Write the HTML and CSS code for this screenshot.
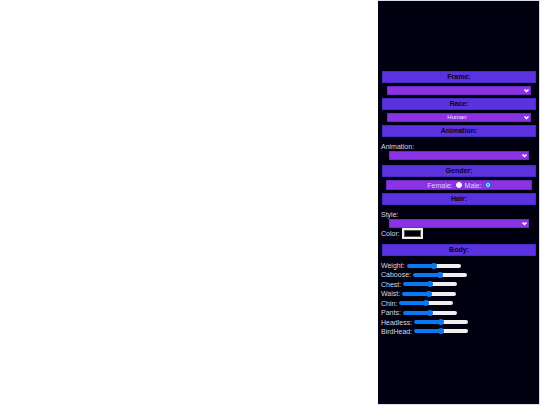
FILE: index.html
```
<!DOCTYPE html>
<html lang="en">
<head>
    <meta charset="UTF-8">
    <meta name="viewport" content="width=device-width, initial-scale=1.0">
    <title>Character Editor</title>
    <link rel="stylesheet" href="styles.css">
</head>
<body>

    <main class="scene"></main>

    <!-- Character Settings -->
    <form class="panel">
        <h2 class="bar">Frame:</h2>
        <select class="dropdown" aria-label="Frame">
            <option></option>
        </select>

        <h2 class="bar">Race:</h2>
        <select class="dropdown" aria-label="Race">
            <option>Human</option>
        </select>

        <h2 class="bar">Animation:</h2>
        <div class="field">
            <label for="animation">Animation:</label>
            <select class="dropdown small" id="animation">
                <option></option>
            </select>
        </div>

        <h2 class="bar">Gender:</h2>
        <div class="gender">
            <label for="female">Female:</label>
            <input type="radio" id="female" name="gender">
            <label for="male">Male:</label>
            <input type="radio" id="male" name="gender" checked>
        </div>

        <h2 class="bar">Hair:</h2>
        <div class="field">
            <label for="style">Style:</label>
            <select class="dropdown small" id="style">
                <option></option>
            </select>
            <div class="color-row">
                <label for="color">Color:</label>
                <input type="color" id="color" value="#000000">
            </div>
        </div>

        <h2 class="bar">Body:</h2>
        <div class="sliders">
            <div class="slider"><label for="weight">Weight:</label><input type="range" id="weight"></div>
            <div class="slider"><label for="caboose">Caboose:</label><input type="range" id="caboose"></div>
            <div class="slider"><label for="chest">Chest:</label><input type="range" id="chest"></div>
            <div class="slider"><label for="waist">Waist:</label><input type="range" id="waist"></div>
            <div class="slider"><label for="chin">Chin:</label><input type="range" id="chin"></div>
            <div class="slider"><label for="pants">Pants:</label><input type="range" id="pants"></div>
            <div class="slider"><label for="headless">Headless:</label><input type="range" id="headless"></div>
            <div class="slider"><label for="birdhead">BirdHead:</label><input type="range" id="birdhead"></div>
        </div>
    </form>

</body>
</html>
```
FILE: styles.css
```
* {
    box-sizing: border-box;
}

body {
    margin: 0;
    min-height: 100vh;
    display: flex;
    background-color: #fff;
    font-family: "Liberation Sans", Arial, sans-serif;
    font-size: 7px;
    line-height: 9px;
}

.scene {
    flex: 1;
}

/* Side Panel */
.panel {
    width: 30%;
    display: flex;
    flex-direction: column;
    gap: 3px;
    padding: 70px 3px 16px 4px;
    border: 1px solid #dcdce4;
    border-left: none;
    background-color: #000010;
    color: #d8d8e2;
}

.bar {
    margin: 0;
    border: 1px solid #4a2bc4;
    background-color: #5a32e0;
    color: #05021c;
    font-size: 7px;
    line-height: 10px;
    text-align: center;
}

/* Dropdowns */
.dropdown {
    appearance: none;
    display: block;
    height: 9px;
    margin: 0 5px;
    padding: 0 8px 0 4px;
    border: 1px solid #6f2bbd;
    border-radius: 0;
    background: #8a33e4 url("data:image/svg+xml,%3Csvg xmlns='http://www.w3.org/2000/svg' viewBox='0 0 10 8'%3E%3Cpath d='M1 1l4 4 4-4' fill='none' stroke='white' stroke-width='3'/%3E%3C/svg%3E") no-repeat right 1px center / 5px 4px;
    color: #f0e4fc;
    font-family: inherit;
    font-size: 6px;
    line-height: 7px;
    text-align: center;
    text-align-last: center;
}

.field {
    margin: 2px 0 2px -1px;
}

.field label {
    display: block;
}

.dropdown.small {
    width: calc(100% - 15px);
    margin: 0 8px;
}

/* Gender */
.gender {
    display: flex;
    justify-content: center;
    align-items: center;
    gap: 3px;
    height: 10px;
    margin: 0 4px;
    border: 1px solid #6f2bbd;
    background-color: #8a33e4;
}

.gender input {
    appearance: none;
    width: 6px;
    height: 6px;
    margin: 0;
    border: 1px solid #fff;
    border-radius: 50%;
    background-color: #fff;
}

.gender input:checked {
    border-color: #0a78f0;
    background-color: #0a78f0;
    box-shadow: inset 0 0 0 1px #fff;
}

/* Hair Color */
.color-row {
    display: flex;
    align-items: center;
    gap: 2px;
}

.color-row input {
    appearance: none;
    width: 21px;
    height: 11px;
    padding: 0;
    border: 2px solid #efefef;
    background-color: #efefef;
}

.color-row input::-webkit-color-swatch-wrapper {
    padding: 0;
}

.color-row input::-webkit-color-swatch {
    border: 1px solid #555;
    border-radius: 0;
}

/* Body Sliders */
.sliders {
    display: flex;
    flex-direction: column;
    justify-content: space-between;
    min-height: 75px;
    margin: 2px 0 0 -1px;
}

.slider {
    display: flex;
    align-items: center;
    gap: 2px;
}

.slider input {
    appearance: none;
    width: 54px;
    height: 6px;
    margin: 0;
    background: none;
}

.slider input::-webkit-slider-runnable-track {
    height: 4px;
    border-radius: 2px;
    background: linear-gradient(to right, #0a78f0 50%, #efefef 50%);
}

.slider input::-webkit-slider-thumb {
    appearance: none;
    width: 6px;
    height: 6px;
    margin-top: -1px;
    border-radius: 50%;
    background-color: #0a78f0;
}
```
